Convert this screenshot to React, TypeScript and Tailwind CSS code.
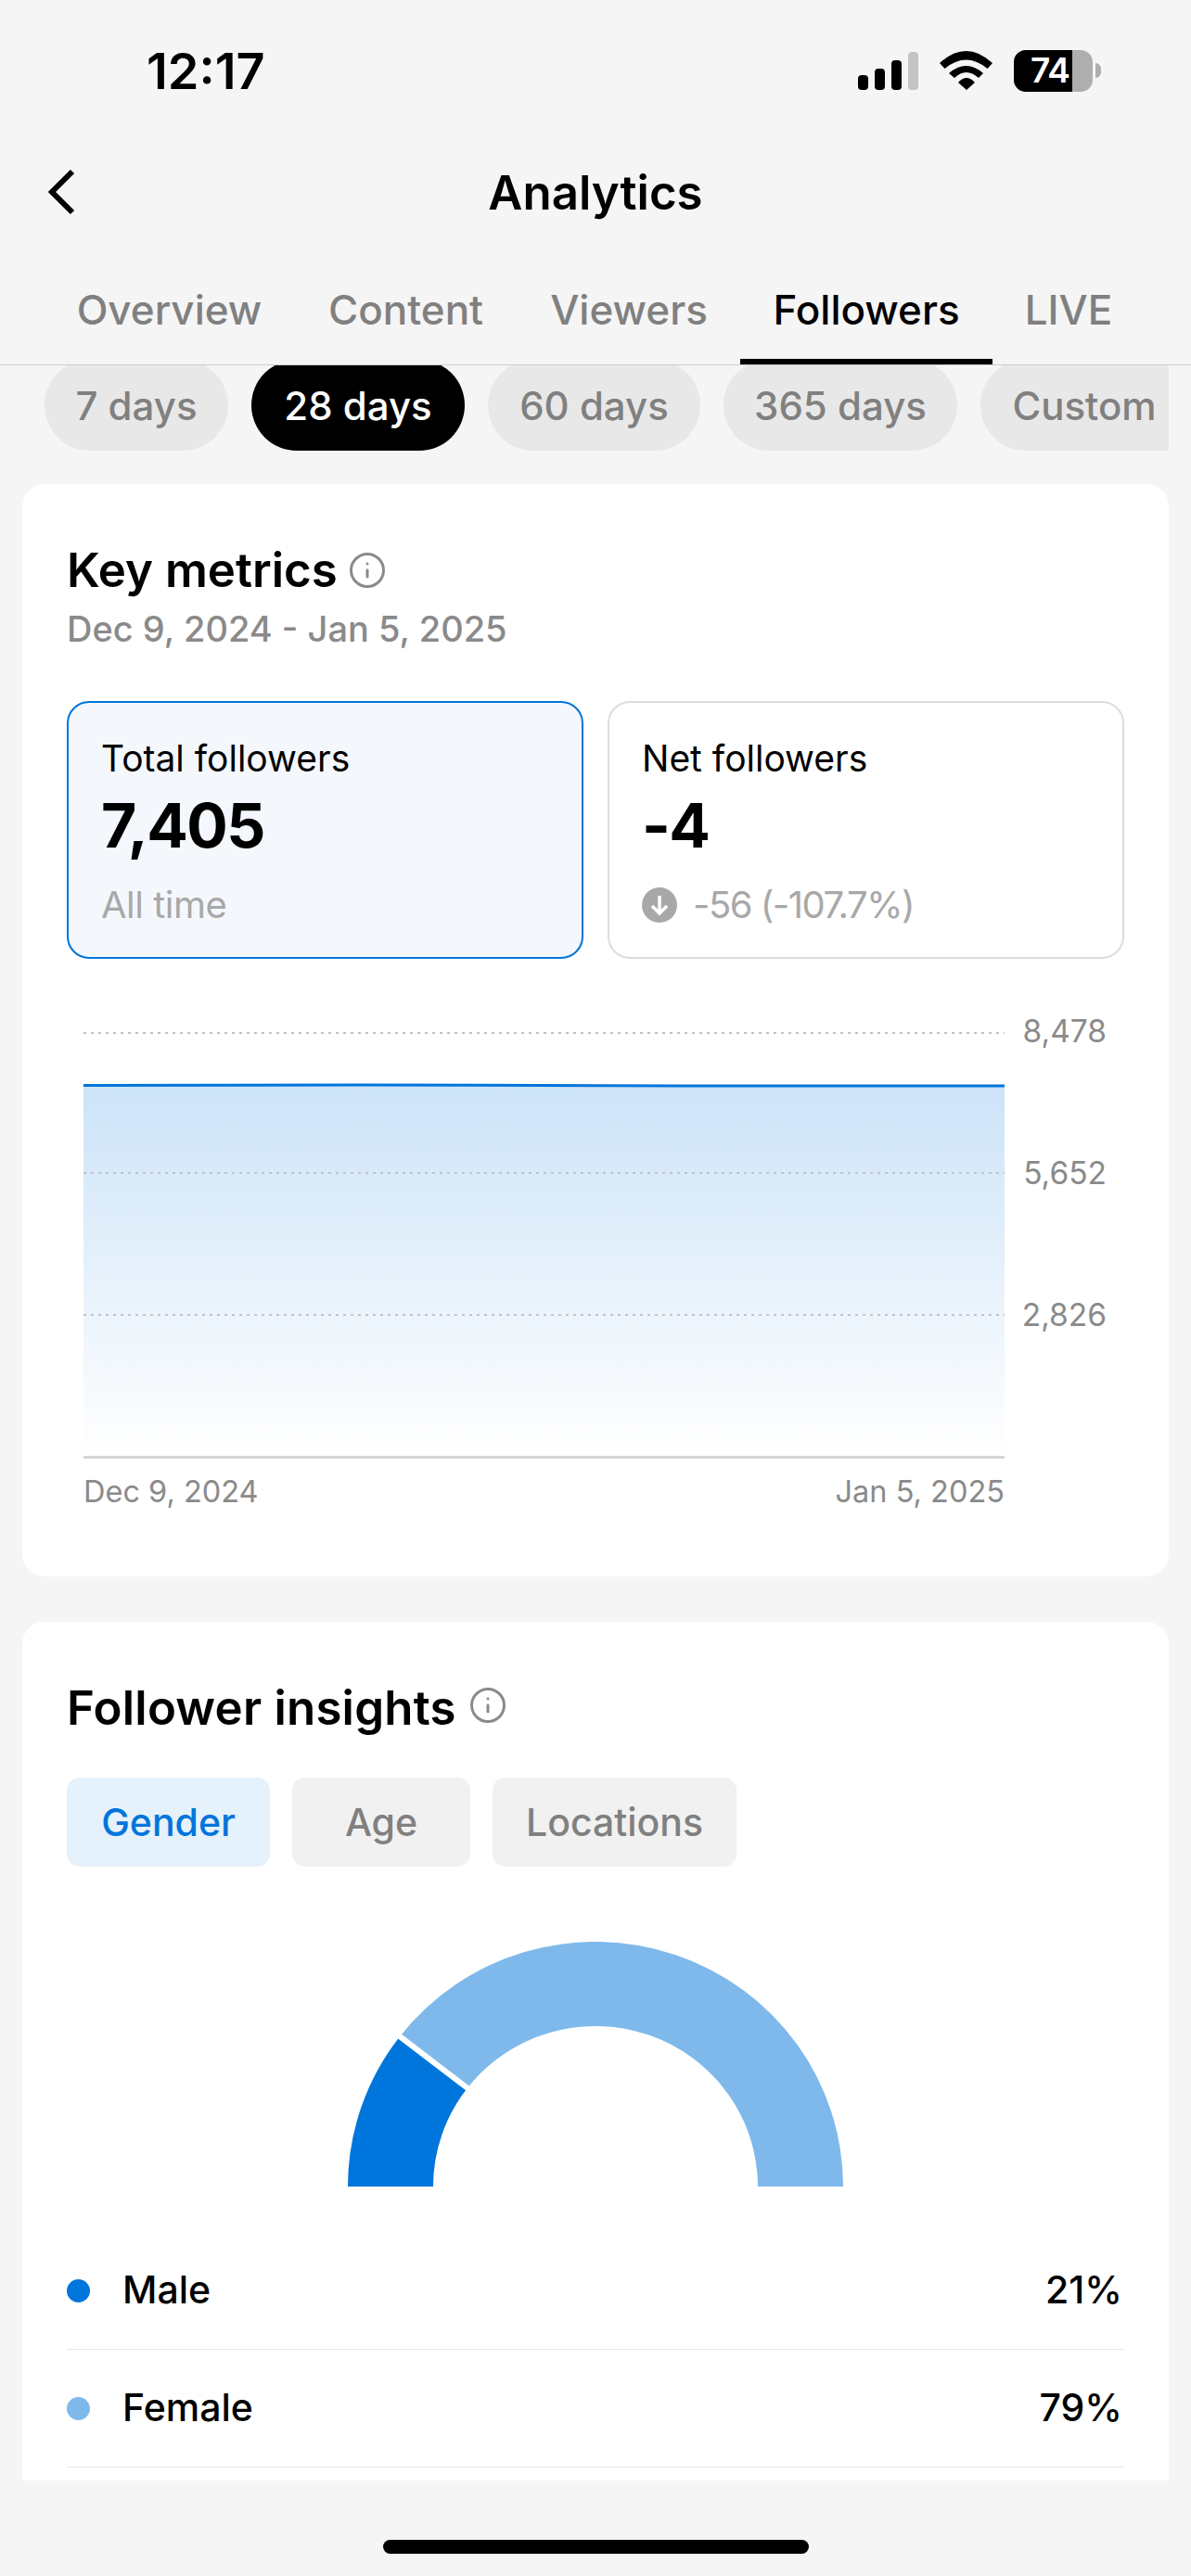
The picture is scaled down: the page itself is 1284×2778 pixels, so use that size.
import React from 'react'
import { Info } from 'lucide-react'

const tabs = [
  { label: 'Overview', width: 'w-[269px]' },
  { label: 'Content', width: 'w-[241px]' },
  { label: 'Viewers', width: 'w-[240px]' },
  { label: 'Followers', width: 'w-[272px]', active: true },
  { label: 'LIVE', width: 'w-[164px]' },
]

const ranges = [
  { label: '7 days', width: 'w-[198px]' },
  { label: '28 days', width: 'w-[230px]', active: true },
  { label: '60 days', width: 'w-[229px]' },
  { label: '365 days', width: 'w-[252px]' },
  { label: 'Custom', width: 'w-[224px]' },
]

function StatusBar() {
  return (
    <div className="h-[152px] shrink-0 flex items-center justify-between pl-[158px] pr-[97px]">
      <span className="text-[54px] leading-none font-semibold pt-[2px] text-black">12:17</span>
      <div className="flex items-center">
        <div className="flex items-end gap-[7px] h-[41px]">
          <div className="w-[11px] h-[16px] rounded-[4px] bg-black" />
          <div className="w-[11px] h-[23px] rounded-[4px] bg-black" />
          <div className="w-[11px] h-[32px] rounded-[4px] bg-black" />
          <div className="w-[11px] h-[41px] rounded-[4px] bg-[#c4c4c4]" />
        </div>
        <svg width="57" height="42" viewBox="0 0 57 42" className="ml-[23px]">
          <path d="M0 13Q28.5 -13 57 13L51.5 19Q28.5 0 5.5 19Z" fill="#000" />
          <path d="M10 24Q28.5 8 47 24L42 29Q28.5 17 16 29Z" fill="#000" />
          <path d="M20 34Q29 24 38 34L29 42Z" fill="#000" />
        </svg>
        <div className="ml-[23px] relative w-[85px] h-[45px] rounded-[13px] overflow-hidden bg-[#aeaeae]">
          <div className="w-[63px] h-full bg-black" />
          <span className="absolute left-[18px] top-0 h-full flex items-center text-[37px] font-semibold tracking-[-1px] text-white">
            74
          </span>
        </div>
        <div className="ml-[3px] w-[6px] h-[16px] rounded-r-[6px] bg-[#aeaeae]" />
      </div>
    </div>
  )
}

function Header() {
  return (
    <>
      <div className="h-[110px] shrink-0 grid grid-cols-[1fr_auto_1fr] items-center pl-[51px]">
        <svg width="30" height="50" viewBox="0 0 30 50" fill="none">
          <path d="M27 3L5 25L27 47" stroke="#000" strokeWidth="6" />
        </svg>
        <span className="text-[51px] leading-none font-semibold text-black -ml-[51px]">Analytics</span>
        <div />
      </div>
      <div className="h-[132px] shrink-0 flex pl-[48px] border-b border-[#cccccc]">
        {tabs.map((t) => (
          <div
            key={t.label}
            className={`${t.width} h-full flex items-center justify-center pt-[19px] border-b-[6px] text-[44px] font-medium ${
              t.active ? 'border-black text-black' : 'border-transparent text-[#808080]'
            }`}
          >
            {t.label}
          </div>
        ))}
      </div>
      <div className="h-[92px] shrink-0 ml-[48px] w-[1212px] overflow-hidden flex gap-[25px]">
        {ranges.map((r) => (
          <div
            key={r.label}
            className={`${r.width} shrink-0 h-[98px] -mt-[6px] rounded-full flex items-center justify-center text-[42px] font-medium ${
              r.active ? 'bg-black text-white' : 'bg-[#e8e8e8] text-[#808080]'
            } ${r.label === 'Custom' ? 'rounded-r-none' : ''}`}
          >
            {r.label}
          </div>
        ))}
      </div>
    </>
  )
}

function StatCard({ label, value, active, children }: { label: string; value: string; active?: boolean; children: React.ReactNode }) {
  return (
    <div
      className={`h-[278px] rounded-[24px] border-2 pl-[35px] pt-[37px] ${
        active ? 'border-[#0075db] bg-[#f4f8fd]' : 'border-[#dddddd] bg-white'
      }`}
    >
      <div className="h-[46px] leading-[46px] text-[39px] font-normal text-black">{label}</div>
      <div className="h-[80px] leading-[80px] mt-[9px] text-[66px] font-bold tracking-[-1.5px] text-black">{value}</div>
      <div className="h-[46px] mt-[23px] flex items-center text-[40px] tracking-[-0.5px] text-[#a8a8a8]">{children}</div>
    </div>
  )
}

function TrendChart() {
  return (
    <>
      <div className="flex mt-[60px] ml-[18px]">
        <svg width="993" height="480" viewBox="0 0 993 480">
          <defs>
            <linearGradient id="area" x1="0" y1="0" x2="0" y2="1">
              <stop offset="0" stopColor="#cce3f8" />
              <stop offset="1" stopColor="#ffffff" />
            </linearGradient>
          </defs>
          <rect x="0" y="76" width="993" height="400" fill="url(#area)" />
          <path d="M0 20H993M0 171H993M0 324H993" stroke="#c2c2c2" strokeWidth="2" strokeDasharray="3 5" />
          <path d="M0 76.5L300 76L640 77L993 77" stroke="#0075db" strokeWidth="3" fill="none" />
          <rect x="0" y="476" width="993" height="3" fill="#d4d4d4" />
        </svg>
        <div className="w-[110px] -mt-[2px] flex flex-col gap-[113px] text-right text-[33.5px] leading-[40px] text-[#8a8a8a]">
          <div>8,478</div>
          <div>5,652</div>
          <div>2,826</div>
        </div>
      </div>
      <div className="w-[993px] ml-[18px] mt-[15px] flex justify-between text-[32.5px] leading-[40px] text-[#8a8a8a]">
        <span>Dec 9, 2024</span>
        <span>Jan 5, 2025</span>
      </div>
    </>
  )
}

function GenderGauge() {
  return (
    <svg width="534" height="264" viewBox="0 0 534 264" className="mx-auto mt-[81px]">
      <path d="M0 264A267 264 0 0 1 56 102.2L128.7 158A175 173 0 0 0 92 264Z" fill="#0075db" />
      <path d="M56 102.2A267 264 0 0 1 534 264H442A175 173 0 0 0 128.7 158Z" fill="#7fb9ec" />
      <path d="M48 96L137 164" stroke="#fff" strokeWidth="6" />
    </svg>
  )
}

function LegendRow({ dot, label, pct }: { dot: string; label: string; pct: string }) {
  return (
    <div className="h-[127px] shrink-0 flex items-center border-b border-[#e6e6e6] text-[41px] font-medium text-black">
      <div className={`w-[25px] h-[25px] rounded-full ${dot}`} />
      <span className="ml-[35px] flex-1">{label}</span>
      <span className="pr-[2px]">{pct}</span>
    </div>
  )
}

export default function App() {
  return (
    <div className="w-[1284px] h-[2778px] bg-[#f5f5f5] overflow-hidden flex flex-col [font-family:Inter,sans-serif]">
      <StatusBar />
      <Header />

      <div className="mx-[24px] mt-[36px] h-[1178px] shrink-0 rounded-[24px] bg-white px-[48px] pt-[64px]">
        <div className="h-[58px] flex items-center text-[51px] font-semibold text-black">
          Key metrics
          <Info size={42} strokeWidth={1.7} color="#8a8a8a" className="ml-[11px]" />
        </div>
        <div className="h-[48px] mt-[10px] leading-[48px] text-[38px] font-medium text-[#8a8a8a]">
          Dec 9, 2024 - Jan 5, 2025
        </div>
        <div className="grid grid-cols-2 gap-[26px] mt-[54px]">
          <StatCard label="Total followers" value="7,405" active>
            All time
          </StatCard>
          <StatCard label="Net followers" value="-4">
            <svg width="38" height="38" viewBox="0 0 38 38" className="mr-[17px]">
              <circle cx="19" cy="19" r="19" fill="#a8a8a8" />
              <path d="M19 9V28M11 20L19 28L27 20" stroke="#fff" strokeWidth="3.5" fill="none" />
            </svg>
            <span className="tracking-[-1.5px]">-56 (-107.7%)</span>
          </StatCard>
        </div>
        <TrendChart />
      </div>

      <div className="mx-[24px] mt-[49px] h-[926px] shrink-0 overflow-hidden rounded-t-[24px] bg-white px-[48px] pt-[64px]">
        <div className="h-[58px] flex items-center text-[51px] font-semibold tracking-[0.2px] text-black">
          Follower insights
          <Info size={42} strokeWidth={1.7} color="#8a8a8a" className="ml-[13px] -mt-[6px]" />
        </div>
        <div className="flex gap-[24px] mt-[46px] text-[41px] font-medium">
          <div className="w-[219px] h-[96px] pt-[2px] rounded-[14px] bg-[#e5f1fb] text-[#0075db] flex items-center justify-center">Gender</div>
          <div className="w-[192px] h-[96px] pt-[2px] rounded-[14px] bg-[#f1f1f1] text-[#808080] flex items-center justify-center">Age</div>
          <div className="w-[263px] h-[96px] pt-[2px] rounded-[14px] bg-[#f1f1f1] text-[#808080] flex items-center justify-center">Locations</div>
        </div>
        <GenderGauge />
        <div className="mt-[49px]">
          <LegendRow dot="bg-[#0075db]" label="Male" pct="21%" />
          <LegendRow dot="bg-[#7fb9ec]" label="Female" pct="79%" />
        </div>
      </div>

      <div className="flex-1 flex justify-center pt-[64px]">
        <div className="w-[459px] h-[15px] rounded-full bg-black" />
      </div>
    </div>
  )
}
